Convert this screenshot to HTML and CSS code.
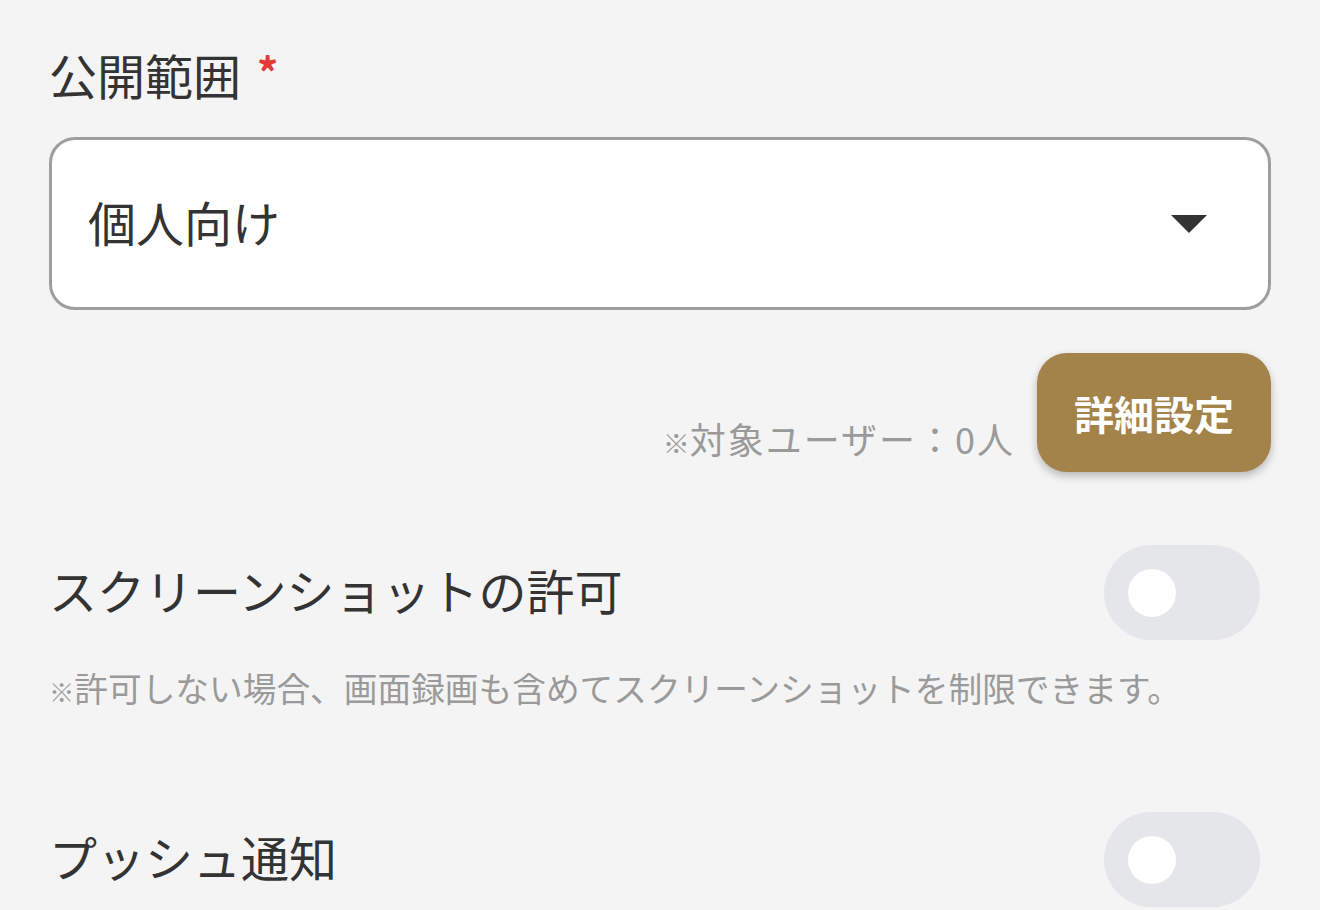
FILE: index.html
```html
<!DOCTYPE html>
<html lang="ja">
<head>
<meta charset="utf-8">
<title>設定</title>
<link rel="stylesheet" href="styles.css">
</head>
<body>
<div class="page">
  <div class="field-label">公開範囲<span class="required">*</span></div>
  <div class="select">
    <span class="select-value">個人向け</span>
    <svg class="caret" width="36" height="18" viewBox="0 0 36 18"><polygon points="0,0 36,0 18,18" fill="#333"/></svg>
  </div>
  <div class="target-row">
    <span class="target-note"><span class="kome">※</span>対象ユーザー：0人</span>
    <button class="detail-btn">詳細設定</button>
  </div>
  <div class="switch-row first">
    <span class="switch-label">スクリーンショットの許可</span>
    <span class="toggle"><span class="knob"></span></span>
  </div>
  <p class="hint"><span class="kome">※</span>許可しない場合、画面録画も含めてスクリーンショットを制限できます。</p>
  <div class="switch-row push">
    <span class="switch-label">プッシュ通知</span>
    <span class="toggle"><span class="knob"></span></span>
  </div>
</div>
</body>
</html>
```
FILE: styles.css
```css
html, body {
  margin: 0;
  padding: 0;
  background: #f4f4f4;
}
body {
  font-family: "Noto Sans CJK JP", "Noto Sans", sans-serif;
  color: #333;
}
.page {
  padding: 38px 49px 0 49px;
}
.field-label {
  font-size: 48px;
  line-height: 72px;
  height: 72px;
  display: flex;
  align-items: center;
}
.required {
  color: #e53935;
  font-size: 42px;
  font-weight: 700;
  margin-left: 16px;
  margin-top: -6px;
}
.select {
  margin-top: 27px;
  box-sizing: border-box;
  height: 173px;
  background: #fff;
  border: 3px solid #9e9e9e;
  border-radius: 26px;
  display: flex;
  align-items: center;
  justify-content: space-between;
  padding: 0 61px 0 36px;
}
.select-value {
  font-size: 48px;
  line-height: 1;
  margin-bottom: 6px;
}
.caret {
  display: block;
}
.target-row {
  margin-top: 43px;
  display: flex;
  justify-content: flex-end;
  align-items: flex-end;
  gap: 22px;
}
.target-note {
  font-size: 36px;
  line-height: 48px;
  color: #9a9a9a;
  letter-spacing: 2px;
  margin-bottom: 5px;
}
.kome {
  font-size: 0.75em;
  letter-spacing: 0;
}
.detail-btn {
  width: 234px;
  height: 119px;
  border: none;
  border-radius: 30px;
  background: #a3834a;
  color: #fff;
  font-family: "Noto Sans CJK JP", sans-serif;
  font-size: 40px;
  font-weight: 700;
  padding: 0;
  box-shadow: 0 4px 8px rgba(0, 0, 0, 0.25);
}
.switch-row {
  display: flex;
  justify-content: space-between;
  align-items: center;
  padding-right: 11px;
}
.switch-row.first {
  margin-top: 73px;
}
.switch-row.push {
  margin-top: 97px;
}
.switch-label {
  font-size: 48px;
  line-height: 1;
  margin-bottom: 8px;
}
.toggle {
  width: 156px;
  height: 95px;
  border-radius: 48px;
  background: #e5e6ea;
  display: flex;
  align-items: center;
  padding-left: 24px;
  box-sizing: border-box;
}
.knob {
  width: 48px;
  height: 48px;
  border-radius: 50%;
  background: #fff;
}
.hint {
  margin: 24px 0 0 0;
  font-size: 33.7px;
  line-height: 48px;
  color: #9a9a9a;
}
```
